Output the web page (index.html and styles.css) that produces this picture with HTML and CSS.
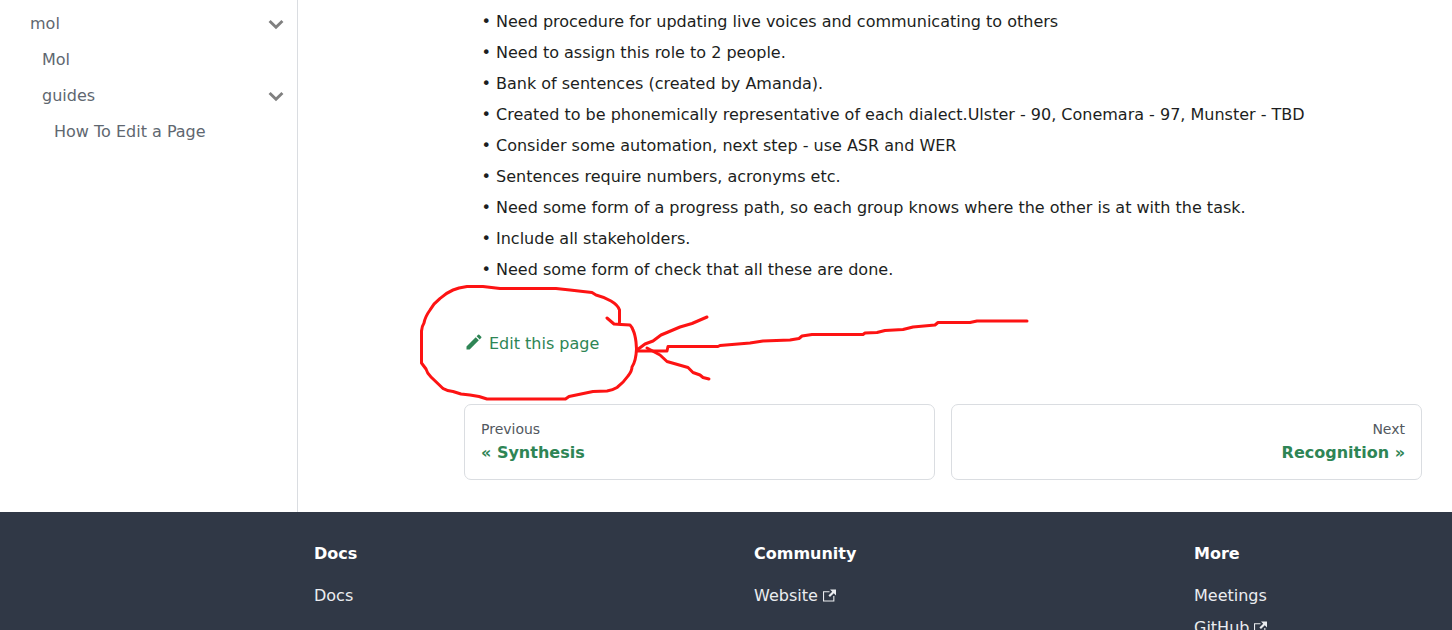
FILE: index.html
```html
<!DOCTYPE html>
<html lang="en">

<head>
  <meta charset="utf-8">
  <meta name="viewport" content="width=device-width, initial-scale=1.0">
  <title>How To Edit a Page</title>
  <link rel="stylesheet" href="styles.css">
</head>

<body>
  <div class="page">
    <aside class="sidebar">
      <ul class="menu">
        <li>
          <div class="menu-row">
            <a class="menu-link" href="#">mol</a>
            <button class="menu-toggle" type="button" aria-label="Toggle mol">
              <svg viewBox="0 0 24 24"><path d="M7.2 9.7L12 14.400L16.800 9.7"/></svg>
            </button>
          </div>
          <ul class="submenu">
            <li>
              <div class="menu-row"><a class="menu-link" href="#">Mol</a></div>
            </li>
            <li>
              <div class="menu-row">
                <a class="menu-link" href="#">guides</a>
                <button class="menu-toggle" type="button" aria-label="Toggle guides">
                  <svg viewBox="0 0 24 24"><path d="M7.2 9.7L12 14.400L16.800 9.7"/></svg>
                </button>
              </div>
              <ul class="submenu">
                <li>
                  <div class="menu-row"><a class="menu-link" href="#">How To Edit a Page</a></div>
                </li>
              </ul>
            </li>
          </ul>
        </li>
      </ul>
    </aside>

    <main class="content">
      <ul class="notes">
        <li>Need procedure for updating live voices and communicating to others</li>
        <li>Need to assign this role to 2 people.</li>
        <li>Bank of sentences (created by Amanda).</li>
        <li>Created to be phonemically representative of each dialect.Ulster - 90, Conemara - 97, Munster - TBD</li>
        <li>Consider some automation, next step - use ASR and WER</li>
        <li>Sentences require numbers, acronyms etc.</li>
        <li>Need some form of a progress path, so each group knows where the other is at with the task.</li>
        <li>Include all stakeholders.</li>
        <li>Need some form of check that all these are done.</li>
      </ul>

      <div class="edit-row">
        <a class="edit-link" href="#">
          <svg class="edit-icon" viewBox="0 0 40 40" aria-hidden="true"><path d="m34.5 11.7l-3 3.1-6.3-6.3 3.1-3q0.5-0.5 1.2-0.5t1.1 0.5l3.9 3.9q0.5 0.4 0.5 1.1t-0.5 1.2z m-29.5 17.1l18.4-18.5 6.3 6.3-18.4 18.4h-6.3v-6.2z"/></svg>
          Edit this page
        </a>
        <!-- hand drawn circle and arrow -->
        <svg class="marker" viewBox="414 280 620 126" aria-hidden="true">
          <path d="M619.5 322L619.5 310Q618 305 611 301Q604 297 596 295L592 292.500L583 291.500L570 290L556 288.500L500 288.500L483 286.500L467 286.500L459 288L453 290Q446 293 440 298.500Q434 303 430 310Q425 317 424 323Q422 326 421.500 331L421.500 363L426 369Q427 373 431 377L443 388.500Q447 391 453 391.500L461 394L470 395L479 396.500L487 399L565.500 399L569 396.500L581 394L593 391.500L607 391Q613 390 617 387.500Q624 382 628 376Q632 371 632 367Q636 361 636.500 349L636 342Q635 334 633 330Q632 327 630 325L621 324.500L614 324L607 318"/>
          <path d="M1027 321L977 321L970 322.500L938 322.500L935 325L913 327L903 329.500L885 330.500L877 332.500L865 333L863 334.500L812 334.500L802 336L799 338.500L790 340L763 341L750 343L738 344L720 345.500L718 346.500L668 346.500L667 351L637 351"/>
          <path d="M707 317L692 323.500L680 327L667 332.500L661 335L653 341L645 344L637 350"/>
          <path d="M647 348L660 355L667 361.500L688 367.500L693 372.500L700 375L703 377.500L709 379"/>
        </svg>
      </div>

      <nav class="pagination" aria-label="Docs pages">
        <a class="page-card" href="#">
          <span class="page-sub">Previous</span>
          <span class="page-label">« Synthesis</span>
        </a>
        <a class="page-card page-next" href="#">
          <span class="page-sub">Next</span>
          <span class="page-label">Recognition »</span>
        </a>
      </nav>
    </main>
  </div>

  <footer class="footer">
    <div>
      <h4>Docs</h4>
      <ul>
        <li><a href="#">Docs</a></li>
      </ul>
    </div>
    <div>
      <h4>Community</h4>
      <ul>
        <li><a href="#">Website<svg class="external" viewBox="0 0 24 24" aria-hidden="true"><path d="M21 13v10h-21v-19h12v2h-10v15h17v-8h2zm3-12h-10.988l4.035 4-6.977 7.07 2.828 2.828 6.977-7.07 4.125 4.172v-11z"/></svg></a></li>
      </ul>
    </div>
    <div>
      <h4>More</h4>
      <ul>
        <li><a href="#">Meetings</a></li>
        <li><a href="#">GitHub<svg class="external" viewBox="0 0 24 24" aria-hidden="true"><path d="M21 13v10h-21v-19h12v2h-10v15h17v-8h2zm3-12h-10.988l4.035 4-6.977 7.07 2.828 2.828 6.977-7.07 4.125 4.172v-11z"/></svg></a></li>
      </ul>
    </div>
  </footer>
</body>

</html>
```

FILE: styles.css
```css
*,
*::before,
*::after {
  box-sizing: border-box;
}

body {
  margin: 0;
  height: 100vh;
  overflow: hidden;
  background-color: #fff;
  color: #1c1e21;
  font-family: "DejaVu Sans", sans-serif;
  font-size: 16px;
  line-height: 27px;
}

ul {
  margin: 0;
  padding: 0;
  list-style: none;
}

a {
  color: #2e8555;
  text-decoration: none;
}

.page {
  display: flex;
}

/* sidebar */
.sidebar {
  flex: none;
  width: 298px;
  padding: 8px 5px 8px 18px;
  border-right: 1px solid #dadde1;
}

.submenu {
  padding-left: 12px;
}

.menu-row {
  display: flex;
  height: 32px;
  margin-bottom: 4px;
}

.menu-link {
  flex: 1;
  padding: 6px 12px;
  color: #606770;
  line-height: 20px;
}

.menu-toggle {
  width: 32px;
  height: 32px;
  padding: 0;
  border: 0;
  background: none;
  cursor: pointer;
}

.menu-toggle svg {
  display: block;
  fill: none;
  stroke: #808080;
  stroke-width: 2.2;
}

/* doc */
.content {
  flex: 1;
  min-width: 0;
  padding: 8px 30px 32px 166px;
}

.notes {
  padding-left: 32px;
  list-style: "• ";
}

.notes li + li {
  margin-top: 4px;
}

.edit-row {
  position: relative;
  display: flex;
  margin: 47px 0;
}

.edit-link {
  display: flex;
  align-items: center;
  gap: 5px;
}

.edit-icon {
  width: 20px;
  height: 20px;
  margin-bottom: 3px;
  fill: currentColor;
}

.marker {
  position: absolute;
  top: -50px;
  left: -50px;
  width: 620px;
  height: 126px;
  fill: none;
  stroke: #fd1313;
  stroke-width: 3;
  stroke-linecap: round;
  stroke-linejoin: round;
  pointer-events: none;
}

.pagination {
  display: grid;
  grid-template-columns: 1fr 1fr;
  gap: 16px;
}

.page-card {
  display: flex;
  flex-direction: column;
  gap: 6px;
  padding: 16px;
  border: 1px solid #dadde1;
  border-radius: 7px;
}

.page-next {
  text-align: right;
}

.page-sub {
  color: #525860;
  font-size: 14px;
  line-height: 16px;
}

.page-label {
  font-weight: bold;
  line-height: 20px;
}

/* footer */
.footer {
  display: grid;
  grid-template-columns: 1fr 1fr 258px;
  padding: 32px 0 32px 314px;
  background-color: #303846;
}

.footer h4 {
  margin: 0 0 16px;
  color: #fff;
  font-size: 16px;
  line-height: 20px;
}

.footer a {
  color: #ebedf0;
  line-height: 32px;
}

.footer li {
  height: 32px;
}

.external {
  width: 13px;
  height: 13px;
  margin-left: 5px;
  vertical-align: -1px;
  fill: currentColor;
}
```
